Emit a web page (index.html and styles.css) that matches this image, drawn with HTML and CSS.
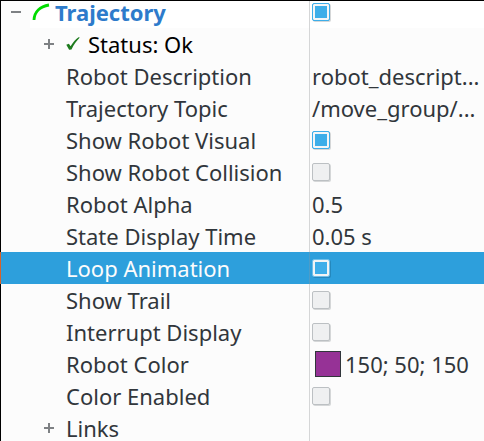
FILE: index.html
```
<!DOCTYPE html>
<html><head><meta charset="utf-8"><title>Displays</title><link rel="stylesheet" href="styles.css"></head>
<body><div class="tree">
<div class="row title"><div class="name"><svg class="minus" viewBox="0 0 10 10"><path d="M0 5H10"/></svg><svg class="arc" viewBox="0 0 18 18"><path d="M2 17C2.3 9 8 3.5 17 2"/></svg><b>Trajectory</b></div><div class="value"><i class="check on"></i></div></div>
<div class="row status"><div class="name"><svg class="plus" viewBox="0 0 10 10"><path d="M0 5H10M5 0V10"/></svg><svg class="tick" viewBox="0 0 14 14"><path d="M0.3 7.7L2.9 6.7L4.6 9.3C7 5.3 9.5 2.5 12.5 0.3L13.8 0.6C10.4 4 7.7 8 5.5 12.5L3.1 12.8Z"/></svg><span>Status: Ok</span></div><div class="value"></div></div>
<div class="row"><div class="name">Robot Description</div><div class="value">robot_descript...</div></div>
<div class="row"><div class="name">Trajectory Topic</div><div class="value">/move_group/...</div></div>
<div class="row"><div class="name">Show Robot Visual</div><div class="value"><i class="check on"></i></div></div>
<div class="row"><div class="name">Show Robot Collision</div><div class="value"><i class="check"></i></div></div>
<div class="row"><div class="name">Robot Alpha</div><div class="value">0.5</div></div>
<div class="row"><div class="name">State Display Time</div><div class="value">0.05 s</div></div>
<div class="row selected"><div class="name">Loop Animation</div><div class="value"><i class="check"></i></div></div>
<div class="row"><div class="name">Show Trail</div><div class="value"><i class="check"></i></div></div>
<div class="row"><div class="name">Interrupt Display</div><div class="value"><i class="check"></i></div></div>
<div class="row"><div class="name">Robot Color</div><div class="value"><i class="swatch"></i>150; 50; 150</div></div>
<div class="row"><div class="name">Color Enabled</div><div class="value"><i class="check"></i></div></div>
<div class="row links"><div class="name"><svg class="plus" viewBox="0 0 10 10"><path d="M0 5H10M5 0V10"/></svg>Links</div><div class="value"></div></div>
</div></body></html>
```
FILE: styles.css
```
*{box-sizing:border-box}
body{margin:0;background:#fcfcfc;color:#31363b;font:22px/32px "Noto Sans",sans-serif;overflow:hidden}
.tree{height:441px;overflow:hidden;border-top:1px solid #000}
.row{display:grid;grid-template-columns:310px 1fr;grid-template-rows:32px;height:32px;white-space:nowrap;border-left:1px solid #000}
.row.title{height:27px;align-content:end;background:linear-gradient(90deg,#fcfcfc 29px,#fff 29px)}
.name{display:flex;align-items:center;padding-left:65px;border-right:1px solid #d5d6d7;margin-right:1px}
.value{display:flex;align-items:center;padding-left:1px}
.title .name{padding-left:10px;color:#2d7bcb}
.status .name,.links .name{padding-left:43px}
.status{color:#000}
.links{height:29px}
.minus,.plus{width:10px;height:10px;fill:none;stroke:#7e8184;stroke-width:2}
.plus{margin-right:12px}
.arc{width:18px;height:18px;margin:0 5px 0 11px;fill:none;stroke:#00dc00;stroke-width:2.8}
.tick{width:14px;height:14px;margin-right:8px;fill:#1e7b1e}
.check{width:18px;height:18px;border:1px solid #bcc0c3;background:#eff0f1;border-radius:2px;box-shadow:1px 1px 0 #d5d7d8}
.on{border-color:#3daee9;background:#3daee9;box-shadow:inset 0 0 0 2px #f4f6f7,1px 1px 0 #d5d7d8}
.selected{background:#2d9fdc;color:#fcfcfc;border-left-color:#d7622b}
.selected .name{border-color:#4c9cc8}
.selected .check{background:#3daee9;border:1px solid #6fbfe9;box-shadow:inset 0 0 0 2px #f1f4f5,1px 1px 0 #2588bd}
.swatch{width:26px;height:26px;margin:0 4px 0 3px;background:#963296;border:1px solid #31363b}
```
